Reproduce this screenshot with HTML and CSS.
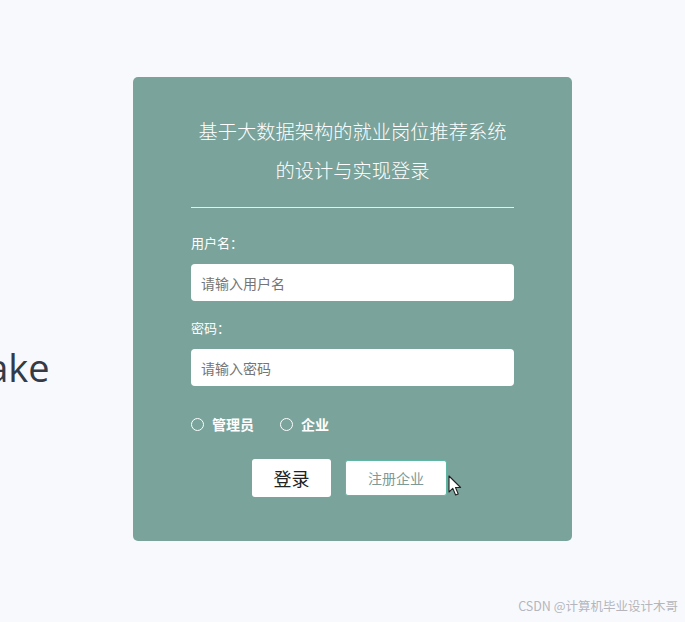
FILE: index.html
```html
<!DOCTYPE html>
<html lang="zh-CN">
  <head>
    <meta charset="UTF-8" />
    <meta name="viewport" content="width=device-width, initial-scale=1.0" />
    <title>登录</title>
    <link rel="stylesheet" href="styles.css">
  </head>
  <body>
    <div class="backdrop-text">Make</div>

    <div class="login-card">
      <h3>基于大数据架构的就业岗位推荐系统<br />的设计与实现登录</h3>
      <form id="loginForm">
        <div class="form-group">
          <label for="username">用户名：</label>
          <input type="text" id="username" name="username" placeholder="请输入用户名" />
        </div>
        <div class="form-group">
          <label for="password">密码：</label>
          <input type="password" id="password" name="password" placeholder="请输入密码" />
        </div>
        <div class="role-group">
          <label class="role"><span class="radio"></span>管理员</label>
          <label class="role"><span class="radio"></span>企业</label>
        </div>
        <div class="btn-row">
          <button type="submit" class="btn-login">登录</button>
          <span class="btn-wrap">
            <button type="button" class="btn-register">注册企业</button>
            <!-- con trỏ chuột -->
            <svg class="cursor" width="14" height="22" viewBox="0 0 14 22">
              <path d="M1 1 L1 17 L4.8 13.4 L7.6 20 L10.2 18.9 L7.5 12.5 L12.6 12.5 Z" fill="#fff" stroke="#222" stroke-width="1.1" stroke-linejoin="round" />
            </svg>
          </span>
        </div>
      </form>
    </div>

    <div class="watermark">CSDN @计算机毕业设计木哥</div>
  </body>
</html>
```

FILE: styles.css
```css
* {
  margin: 0;
  padding: 0;
  box-sizing: border-box;
}

body {
  font-family: "Noto Sans CJK SC", "Noto Sans", sans-serif;
  background-color: #f8f9fd;
  width: 685px;
  height: 622px;
  overflow: hidden;
  position: relative;
  padding: 77px 0 0 133px;
}

/* chữ nền phía sau, bị cắt ở mép trái */
.backdrop-text {
  position: absolute;
  left: -47px;
  top: 344px;
  font-family: "Open Sans", sans-serif;
  font-size: 38px;
  line-height: 46px;
  color: #343b46;
}

.login-card {
  position: relative;
  width: 439px;
  height: 464px;
  background: #7aa39b;
  border-radius: 5px;
  padding: 35px 58px 0;
}

.login-card h3 {
  text-align: center;
  color: #fff;
  font-weight: 300;
  font-size: 19.25px;
  line-height: 39px;
  padding-bottom: 17px;
  border-bottom: 1px solid #e6efed;
  margin-bottom: 25px;
}

.form-group label {
  display: block;
  color: #fff;
  font-size: 13px;
  line-height: 19px;
  margin-bottom: 12px;
}

.form-group input {
  width: 100%;
  height: 37px;
  padding: 0 10px;
  border: none;
  border-radius: 4px;
  background: #fff;
  font-family: inherit;
  font-size: 14px;
  outline: none;
}

.form-group input::placeholder {
  color: #757575;
}

.form-group + .form-group {
  margin-top: 17px;
}

.form-group + .form-group label {
  margin-bottom: 12px;
}

.role-group {
  display: flex;
  gap: 26px;
  margin-top: 28px;
  height: 20px;
  align-items: center;
}

.role {
  display: flex;
  align-items: center;
  gap: 8px;
  color: #fff;
  font-size: 14px;
  font-weight: 700;
}

.radio {
  width: 13px;
  height: 13px;
  border: 1px solid #fff;
  border-radius: 50%;
}

.btn-row {
  display: flex;
  justify-content: center;
  align-items: center;
  gap: 14px;
  margin-top: 25px;
  padding-right: 6px;
}

.btn-login {
  width: 79px;
  height: 38px;
  background: #fff;
  border: none;
  border-radius: 3px;
  color: #222;
  font-family: inherit;
  font-size: 18px;
  cursor: pointer;
}

.btn-wrap {
  position: relative;
}

.btn-register {
  display: block;
  width: 102px;
  height: 36px;
  background: #fff;
  border: 1px solid #5fb6a2;
  border-radius: 3px;
  color: #7c9a97;
  font-family: inherit;
  font-size: 14px;
  cursor: pointer;
}

.cursor {
  position: absolute;
  left: 103px;
  top: 15px;
}

.watermark {
  position: absolute;
  right: 7px;
  bottom: 7px;
  font-size: 12.5px;
  color: #b4b6bc;
}
```
